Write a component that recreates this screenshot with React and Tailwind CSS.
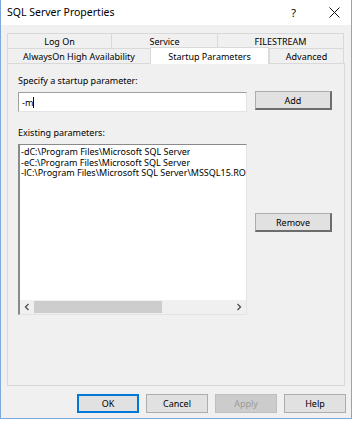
import React from 'react';

const font = "font-['Noto_Sans','Open_Sans',sans-serif]";

function Tab({ label, w, last }) {
  return (
    <div
      className={`h-[15px] flex items-center justify-center border-t border-l border-[#d9d9d9] ${last ? 'border-r' : ''}`}
      style={{ width: w }}
    >
      <span className="leading-none">{label}</span>
    </div>
  );
}

function WinButton({ children, primary, disabled }) {
  let cls = 'bg-[#e1e1e1] border border-[#adadad] text-black';
  if (primary) cls = 'bg-[#e1e1e1] border-2 border-[#0078d7] text-black';
  if (disabled) cls = 'bg-[#cccccc] border border-[#bfbfbf] text-[#9a9a9a]';
  return (
    <div className={`h-[19px] w-[62px] flex items-center justify-center ${cls}`}>
      <span className="leading-none">{children}</span>
    </div>
  );
}

function SideButton({ children }) {
  return (
    <div className="h-[19px] w-[77px] flex items-center justify-center bg-[#e1e1e1] border border-[#adadad] border-r-[#6d6d6d] border-b-[#6d6d6d] border-r-2 border-b-2">
      <span className="leading-none">{children}</span>
    </div>
  );
}

export default function App() {
  const rows = [
    '-dC:\\Program Files\\Microsoft SQL Server\\MSSQL13.MSSQLSERVER',
    '-eC:\\Program Files\\Microsoft SQL Server\\MSSQL13.MSSQLSERVER',
    '-lC:\\Program Files\\Microsoft SQL Server\\MSSQL15.RO',
  ];

  return (
    <div className={`w-[352px] h-[421px] bg-white text-[9px] text-black ${font}`}>
      <div className="h-[419px] flex flex-col border-x border-b border-[#7fa9d8]">
        {/* title bar */}
        <div className="h-[25px] bg-white flex items-center pl-[6px] pr-[11px]">
          <span className="text-[10.5px] leading-none">SQL Server Properties</span>
          <span className="ml-auto text-[11px] leading-none mr-[33px]">?</span>
          <svg width="11" height="11" viewBox="0 0 11 11">
            <path d="M0.5 0.5 L10.5 10.5 M10.5 0.5 L0.5 10.5" stroke="#111" strokeWidth="1" />
          </svg>
        </div>

        {/* body */}
        <div className="flex-1 bg-[#f0f0f0] pl-[6px] pr-[6px] pt-[8px] flex flex-col">
          {/* tab rows */}
          <div className="flex">
            <Tab label="Log On" w={104} />
            <Tab label="Service" w={106} />
            <Tab label="FILESTREAM" w={127} last />
          </div>
          <div className="flex items-end">
            <Tab label="AlwaysOn High Availability" w={143} />
            <div className="relative z-10 w-[119px] h-[17px] -mt-[2px] -mb-px bg-white border-x border-t border-[#d9d9d9] flex items-center justify-center">
              <span className="leading-none">Startup Parameters</span>
            </div>
            <Tab label="Advanced" w={75} last />
          </div>

          {/* panel */}
          <div className="h-[323px] border border-[#d9d9d9] pl-[10px] pt-[12px] flex">
            <div className="w-[229px] flex flex-col">
              <div className="leading-none h-[10px]">Specify a startup parameter:</div>
              <div className="mt-[6px] h-[20px] bg-white border border-[#a0a0a0] border-r-[#e3e3e3] border-b-[#e3e3e3] flex items-center pl-[3px]">
                <span className="leading-none">-m</span>
                <span className="w-px h-[11px] bg-black" />
              </div>
              <div className="mt-[16px] leading-none h-[10px]">Existing parameters:</div>
              <div className="mt-[6px] h-[171px] bg-white border-l-2 border-t border-[#8a8a8a] border-r border-b border-r-[#e3e3e3] border-b-[#e3e3e3] flex flex-col relative overflow-hidden">
                <div className="mt-[2px] w-[227px] border-r border-dotted border-[#555] flex flex-col">
                  {rows.map((r) => (
                    <div key={r} className="h-[10.5px] leading-[10.5px] whitespace-nowrap overflow-hidden pl-[1px]">
                      {r}
                    </div>
                  ))}
                </div>
                <div className="absolute left-[170px] top-[3px] w-[56px] h-[20px] bg-white" />
                <div className="mt-auto h-[14px] bg-[#f0f0f0] flex items-center">
                  <div className="w-[14px] flex items-center justify-center">
                    <svg width="6" height="8" viewBox="0 0 6 8">
                      <path d="M4.5 1 L1.5 4 L4.5 7" fill="none" stroke="#555" strokeWidth="1.4" />
                    </svg>
                  </div>
                  <div className="w-[128px] h-[12px] bg-[#cdcdcd]" />
                  <div className="ml-auto w-[14px] flex items-center justify-center">
                    <svg width="6" height="8" viewBox="0 0 6 8">
                      <path d="M1.5 1 L4.5 4 L1.5 7" fill="none" stroke="#555" strokeWidth="1.4" />
                    </svg>
                  </div>
                </div>
              </div>
            </div>
            <div className="ml-[8px] flex flex-col pt-[15px]">
              <SideButton>Add</SideButton>
              <div className="mt-[103px]">
                <SideButton>Remove</SideButton>
              </div>
            </div>
          </div>

          {/* bottom buttons */}
          <div className="mt-[8px] flex justify-end gap-[7px] -mr-[1px]">
            <WinButton primary>OK</WinButton>
            <WinButton>Cancel</WinButton>
            <WinButton disabled>Apply</WinButton>
            <WinButton>Help</WinButton>
          </div>
        </div>
      </div>
    </div>
  );
}
